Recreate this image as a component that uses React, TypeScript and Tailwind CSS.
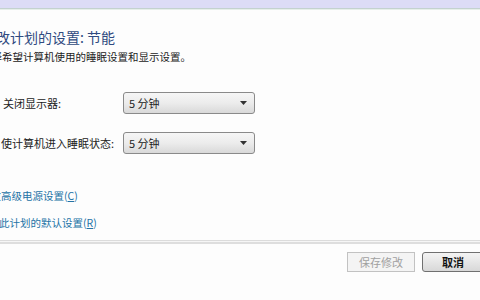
import React from 'react'

const font = { fontFamily: '"Noto Sans CJK SC", "Noto Sans", sans-serif' }

function Select({ value }: { value: string }) {
  return (
    <div className="flex h-[22px] w-[132px] items-center justify-between rounded-[3px] border border-[#8a8a8a] bg-gradient-to-b from-[#f6f6f6] via-[#ececec] to-[#d9d9d9] pl-[5px] pr-[7px] text-[11px] text-[#222]">
      <span>{value}</span>
      <svg width="7" height="4" viewBox="0 0 7 4">
        <path d="M0 0h7L3.5 4z" fill="#333" />
      </svg>
    </div>
  )
}

export default function App() {
  return (
    <div className="flex h-[300px] w-[480px] flex-col overflow-hidden bg-[#fdfdfd]" style={font}>
      <div className="h-[8px] bg-[#dcdcf6]" />
      <div className="h-px bg-[#c3d2cf]" />
      <div className="h-px bg-[#e6efea]" />

      <div className="flex flex-col">
        <h1 className="ml-[-18px] mt-[18px] text-[14px] leading-[18px] whitespace-nowrap text-[#2f4a80]">
          更改计划的设置: 节能
        </h1>
        <p className="ml-[-19px] mt-[3px] text-[10.5px] leading-[16px] whitespace-nowrap text-[#222]">
          选择希望计算机使用的睡眠设置和显示设置。
        </p>

        <div className="mt-[27px] flex items-center">
          <span className="w-[123px] pl-[3px] text-[11px] text-[#222]">关闭显示器:</span>
          <Select value="5 分钟" />
        </div>
        <div className="mt-[18px] flex items-center">
          <span className="w-[123px] pl-[1px] text-[11px] text-[#222]">使计算机进入睡眠状态:</span>
          <Select value="5 分钟" />
        </div>

        <a className="ml-[-20px] mt-[34px] text-[10.5px] leading-[16px] whitespace-nowrap text-[#2473a6]">
          更改高级电源设置(<span className="underline">C</span>)
        </a>
        <a className="ml-[-22px] mt-[11px] text-[10.5px] leading-[16px] whitespace-nowrap text-[#2473a6]">
          还原此计划的默认设置(<span className="underline">R</span>)
        </a>
      </div>

      <div className="mt-[9px] h-px bg-[#dcdcdc]" />
      <div className="h-px bg-[#f6f6f6]" />
      <div className="h-[2px] bg-[#dedede]" />

      <div className="mt-[8px] flex justify-end gap-[7px]">
        <button className="h-[20px] w-[68px] border border-[#c2c2c2] bg-[#f4f4f4] text-[11px] text-[#a0a0a0]">
          保存修改
        </button>
        <button className="mr-[-4px] h-[20px] w-[62px] rounded-[3px] border border-[#707070] bg-gradient-to-b from-[#f4f4f4] to-[#d8d8d8] text-[11px] font-semibold text-[#111]">
          取消
        </button>
      </div>
    </div>
  )
}
